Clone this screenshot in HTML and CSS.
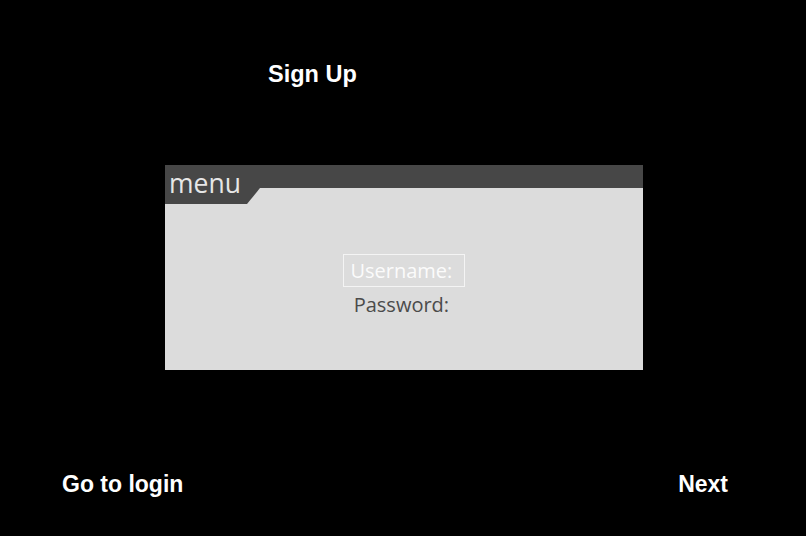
FILE: index.html
```html
<!DOCTYPE html>
<html>
<head>
<meta charset="utf-8">
<title>Sign Up</title>
<link rel="stylesheet" href="styles.css">
</head>
<body>
<div class="page">
  <div class="title">Sign Up</div>
  <div class="panel">
    <div class="panel-head">
      <div class="tab">menu</div>
    </div>
    <div class="panel-body">
      <div class="field field-active">Username: </div>
      <div class="field">Password: </div>
    </div>
  </div>
  <div class="footer">
    <span class="link">Go to login</span>
    <span class="link">Next</span>
  </div>
</div>
</body>
</html>
```

FILE: styles.css
```css
html, body {
  margin: 0;
  padding: 0;
  background: #000;
}
.page {
  width: 806px;
  height: 536px;
  display: flex;
  flex-direction: column;
  background: #000;
  font-family: "Liberation Sans", Arial, sans-serif;
}
.title {
  margin-top: 61px;
  padding-left: 268px;
  font-size: 23.5px;
  font-weight: bold;
  line-height: 26px;
  color: #fff;
}
.panel {
  margin: 78px 0 0 165px;
  width: 478px;
  display: flex;
  flex-direction: column;
}
.panel-head {
  height: 23px;
  background: #474747;
  display: flex;
}
.tab {
  position: relative;
  z-index: 1;
  width: 95px;
  height: 39px;
  flex: none;
  background: #474747;
  clip-path: polygon(0 0, 100% 0, 100% 23px, 82px 39px, 0 39px);
  box-sizing: border-box;
  padding-left: 4px;
  font-family: "Open Sans", sans-serif;
  font-size: 26.5px;
  line-height: 36px;
  color: #e6e6e6;
}
.panel-body {
  height: 182px;
  background: #dcdcdc;
  display: flex;
  flex-direction: column;
  align-items: center;
  box-sizing: border-box;
  padding-top: 66px;
  font-family: "Open Sans", sans-serif;
  font-size: 20px;
}
.field {
  white-space: pre;
  line-height: 34px;
  color: #4b4b4b;
  padding: 0 6px;
  border: 1px solid transparent;
  height: 34px;
  box-sizing: border-box;
}
.field-active {
  height: 33px;
  line-height: 31px;
  color: #fbfbfb;
  border-color: #f4f4f4;
}
.footer {
  margin-top: auto;
  padding: 0 78px 39px 62px;
  display: flex;
  justify-content: space-between;
  font-size: 23px;
  font-weight: bold;
  line-height: 26px;
  color: #fff;
}
```
